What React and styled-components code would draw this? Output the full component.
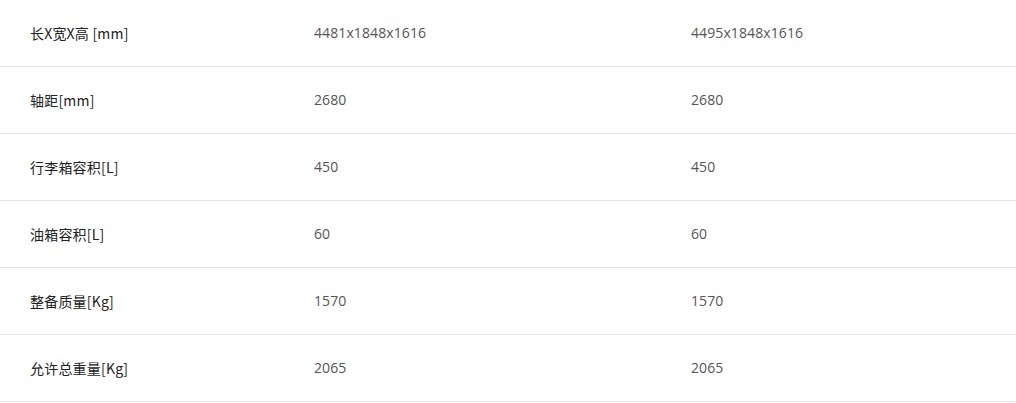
import React from "react";
import styled, { createGlobalStyle } from "styled-components";

const Global = createGlobalStyle`
  html, body { margin: 0; padding: 0; background: #fff; }
  body { font-family: "Open Sans", "Noto Sans CJK SC", sans-serif; }
`;

const Table = styled.div`
  width: 1016px;
  display: flex;
  flex-direction: column;
`;

const Row = styled.div`
  display: grid;
  grid-template-columns: 284px 377px 1fr;
  height: 65px;
  padding-bottom: 1px;
  align-items: center;
  border-bottom: 1px solid #e3e3e3;
  padding-left: 30px;
  box-sizing: content-box;
`;

const Label = styled.div`
  font-family: "Noto Sans CJK SC", sans-serif;
  font-size: 14px;
  letter-spacing: 0.2px;
  color: #222;
`;

const Value = styled.div`
  font-family: "Open Sans", "Noto Sans CJK SC", sans-serif;
  font-size: 14px;
  letter-spacing: 0.1px;
  color: #555;
`;

const rows = [
  ["长X宽X高 [mm]", "4481x1848x1616", "4495x1848x1616"],
  ["轴距[mm]", "2680", "2680"],
  ["行李箱容积[L]", "450", "450"],
  ["油箱容积[L]", "60", "60"],
  ["整备质量[Kg]", "1570", "1570"],
  ["允许总重量[Kg]", "2065", "2065"],
];

export default function App() {
  return (
    <>
      <Global />
      <Table>
        {rows.map((r) => (
          <Row key={r[0]}>
            <Label>{r[0]}</Label>
            <Value>{r[1]}</Value>
            <Value>{r[2]}</Value>
          </Row>
        ))}
      </Table>
    </>
  );
}
